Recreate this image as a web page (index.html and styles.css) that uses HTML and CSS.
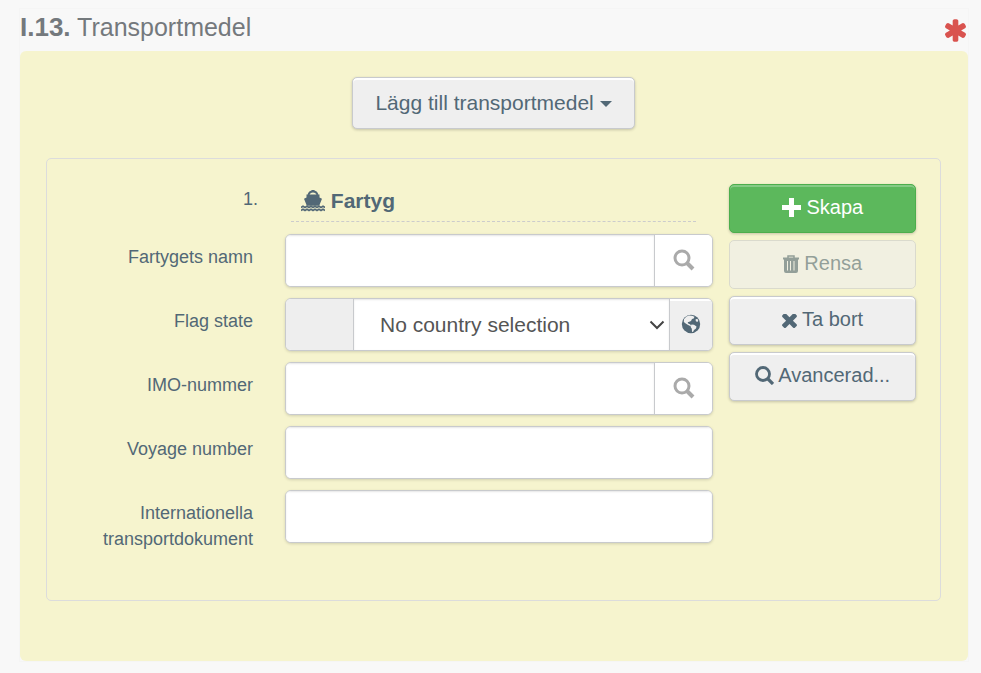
FILE: index.html
```
<!DOCTYPE html>
<html lang="sv">
<head>
    <meta charset="UTF-8">
    <meta name="viewport" content="width=device-width, initial-scale=1.0">
    <title>I.13. Transportmedel</title>
    <link rel="stylesheet" href="styles.css">
</head>
<body>
    <svg class="sprite" aria-hidden="true">
        <symbol id="search" viewBox="0 0 22 22">
            <circle cx="9" cy="9" r="7" fill="none" stroke="currentColor" stroke-width="3"/>
            <path d="M14 14l6 6" fill="none" stroke="currentColor" stroke-width="4"/>
        </symbol>
    </svg>

    <section class="section">
        <header class="section-header">
            <h1><strong>I.13.</strong> Transportmedel</h1>
            <svg class="required" viewBox="180 120 1432 1552" role="img" aria-label="Obligatorisk">
                <path d="M1546 1050q46 26 59.5 77.5t-12.5 97.5l-64 110q-26 46-77.5 59.5t-97.5-12.5l-266-153v307q0 52-38 90t-90 38h-128q-52 0-90-38t-38-90v-307l-266 153q-46 26-97.5 12.5t-77.5-59.5l-64-110q-26-46-12.5-97.5t59.5-77.5l266-154-266-154q-46-26-59.5-77.5t12.5-97.5l64-110q26-46 77.5-59.5t97.5 12.5l266 153v-307q0-52 38-90t90-38h128q52 0 90 38t38 90v307l266-153q46-26 97.5-12.5t77.5 59.5l64 110q26 46 12.5 97.5t-59.5 77.5l-266 154z"/>
            </svg>
        </header>

        <form class="panel">
            <button type="button" class="btn btn-add">Lägg till transportmedel <span class="caret"></span></button>

            <div class="transport">
                <div class="fields">
                    <div class="row">
                        <span class="number">1.</span>
                        <h2 class="title">
                            <svg class="icon-ship" viewBox="0 0 24 22" aria-hidden="true">
                                <path d="M7.500 5C8 2.600 9.500 1.500 12 1.500S16 2.600 16.500 5" fill="none" stroke="currentColor" stroke-width="2"/>
                                <path d="M10.500 0h3v1.500h-3zM5.500 4.500h13v3l2.500 1.200-2.800 7H5.800L3 8.700l2.500-1.200z" fill="currentColor"/>
                                <path d="M0 17.500l2-1.300 2 1.300 2-1.300 2 1.300 2-1.300 2 1.300 2-1.300 2 1.300 2-1.300 2 1.300 2-1.300 2 1.300M0 20.500l2-1.300 2 1.300 2-1.300 2 1.300 2-1.300 2 1.300 2-1.300 2 1.300 2-1.300 2 1.300 2-1.300 2 1.300" fill="none" stroke="currentColor" stroke-width="1.600"/>
                            </svg>
                            Fartyg
                        </h2>
                    </div>
                    <div class="row">
                        <label for="shipName">Fartygets namn</label>
                        <div class="group">
                            <input type="text" id="shipName">
                            <button type="button" class="addon addon-search" aria-label="Sök fartyg"><svg><use href="#search"/></svg></button>
                        </div>
                    </div>
                    <div class="row">
                        <label for="flagState">Flag state</label>
                        <div class="group">
                            <span class="flag"></span>
                            <div class="select">
                                <select id="flagState">
                                    <option>No country selection</option>
                                </select>
                                <svg class="chevron" viewBox="0 0 16 10" aria-hidden="true"><path d="M1.500 1.500L8 8l6.500-6.500" fill="none" stroke="currentColor" stroke-width="2"/></svg>
                            </div>
                            <button type="button" class="addon addon-globe" aria-label="Land">
                                <svg viewBox="0 0 20 20">
                                    <circle cx="10" cy="10" r="9.200" fill="currentColor"/>
                                    <path d="M3 5l2.500-2.600 2.500-.9 3 .3 2.500 1-.8 1.700-1.700.6-1 1.900-1.700.8-1.600.5.500 1.300 1.800.6 1.200 1.300-1.100.5-2.400-1.200-2-1.300-1.900-1.500zM14.500 5.500l1.800-.7 1 1.700-.9 1.600-1.500-.8zM10.500 10.500l2.500.3 2.500 1.700-.5 2-2 1.600-1 1.900-1-.3-.2-3-1.300-2z" class="land"/>
                                </svg>
                            </button>
                        </div>
                    </div>
                    <div class="row">
                        <label for="imo">IMO-nummer</label>
                        <div class="group">
                            <input type="text" id="imo">
                            <button type="button" class="addon addon-search" aria-label="Sök IMO-nummer"><svg><use href="#search"/></svg></button>
                        </div>
                    </div>
                    <div class="row">
                        <label for="voyage">Voyage number</label>
                        <div class="group">
                            <input type="text" id="voyage">
                        </div>
                    </div>
                    <div class="row">
                        <label for="documents">Internationella transportdokument</label>
                        <div class="group">
                            <input type="text" id="documents">
                        </div>
                    </div>
                </div>

                <div class="actions">
                    <button type="button" class="btn btn-success">
                        <svg class="icon-plus" viewBox="0 0 19 19" aria-hidden="true"><path d="M7 0h5v7h7v5h-7v7H7v-7H0V7h7z" fill="currentColor"/></svg>
                        Skapa
                    </button>
                    <button type="button" class="btn" disabled>
                        <svg class="icon-trash" viewBox="0 0 16 18" aria-hidden="true">
                            <path d="M5 3V1h6v2" fill="none" stroke="currentColor" stroke-width="1.500"/>
                            <path fill-rule="evenodd" d="M0 2.500h16v2h-1V16q0 2-2 2H3q-2 0-2-2V4.500H0zM4 6v9.500h1V6zM7 6v9.500h1V6zM10.500 6v9.500h1V6z" fill="currentColor"/>
                        </svg>
                        Rensa
                    </button>
                    <button type="button" class="btn">
                        <svg class="icon-times" viewBox="300 430 1192 1196" aria-hidden="true"><path fill="currentColor" d="M1490 1322q0 40-28 68l-136 136q-28 28-68 28t-68-28l-294-294-294 294q-28 28-68 28t-68-28l-136-136q-28-28-28-68t28-68l294-294-294-294q-28-28-28-68t28-68l136-136q28-28 68-28t68 28l294 294 294-294q28-28 68-28t68 28l136 136q28 28 28 68t-28 68l-294 294 294 294q28 28 28 68z"/></svg>
                        Ta bort
                    </button>
                    <button type="button" class="btn">
                        <svg class="icon-search" viewBox="0 0 19 19" aria-hidden="true">
                            <circle cx="8" cy="8" r="6.500" fill="none" stroke="currentColor" stroke-width="2.800"/>
                            <path d="M12.500 12.500l5.500 5.500" fill="none" stroke="currentColor" stroke-width="3.200"/>
                        </svg>
                        Avancerad...
                    </button>
                </div>
            </div>
        </form>
    </section>
</body>
</html>
```

FILE: styles.css
```
* {
    box-sizing: border-box;
}
body {
    margin: 0;
    padding: 8px 12px 12px 19px;
    background: #f8f8f8;
    color: #526876;
    font-family: Arial, "Liberation Sans", sans-serif;
    font-size: 18px;
    line-height: 26px;
}
.sprite {
    display: none;
}
.section {
    border: 1px solid #f5f5f5;
}
.section-header {
    display: flex;
    justify-content: space-between;
    height: 42px;
    padding-right: 2px;
}
h1 {
    margin: 0;
    padding-top: 4px;
    color: #74797d;
    font-size: 25px;
    font-weight: normal;
    line-height: 28px;
}
h1 strong {
    font-size: 26px;
}
.required {
    width: 21px;
    height: 23px;
    margin-top: 10px;
    fill: #d9534f;
}
.panel {
    padding: 26px 27px 60px 26px;
    border-radius: 6px;
    background: #f6f4ce;
    text-align: center;
}
.btn {
    height: 49px;
    padding: 0 20px 2px;
    border: 1px solid #c8cacd;
    border-radius: 5px;
    background: #efefef;
    box-shadow: inset 0 2px 0 #fff, 0 1px 3px rgba(0, 0, 0, 0.2);
    color: #526876;
    font-family: inherit;
    font-size: 20px;
    cursor: pointer;
}
.btn svg {
    vertical-align: -3px;
}
.btn-add {
    height: 52px;
    padding: 0 22px;
    font-size: 21px;
}
.caret {
    display: inline-block;
    border-top: 6px solid;
    border-right: 6px solid transparent;
    border-left: 6px solid transparent;
    vertical-align: 3px;
}
.btn-success {
    border-color: #4cae4c;
    background: #5cb85c;
    box-shadow: inset 0 2px 0 #85ca85, 0 1px 3px rgba(0, 0, 0, 0.2);
    color: #fff;
}
.btn:disabled {
    opacity: 0.6;
    box-shadow: none;
    cursor: default;
}
.transport {
    display: grid;
    grid-template-columns: 666fr 187fr;
    gap: 16px;
    margin-top: 29px;
    padding: 25px 24px 48px 0;
    border: 1px solid #dcdcdc;
    border-radius: 5px;
}
.fields {
    display: flex;
    flex-direction: column;
    gap: 11px;
}
.row {
    display: grid;
    grid-template-columns: 206fr 428fr;
    gap: 32px;
}
.row label {
    padding: 10px 0 0 40px;
    text-align: right;
}
.number {
    padding: 2px 0 0;
    margin-right: -5px;
    text-align: right;
}
.title {
    height: 38px;
    margin: 0 17px 1px 6px;
    padding: 4px 0 0 10px;
    border-bottom: 1px dashed #ccc;
    font-size: 21px;
    text-align: left;
}
.icon-ship {
    width: 24px;
    height: 22px;
    vertical-align: -4px;
}
.group {
    display: flex;
    height: 53px;
    border: 1px solid #c8cacd;
    border-radius: 6px;
    background: #fff;
    box-shadow: 0 1px 3px rgba(0, 0, 0, 0.15);
    overflow: hidden;
}
.group input,
.group select {
    flex: 1;
    width: 100%;
    min-width: 0;
    height: 100%;
    padding: 0 26px;
    border: 0;
    background: #fff;
    box-shadow: inset 0 1px 2px rgba(0, 0, 0, 0.1);
    color: #555;
    font-family: inherit;
    font-size: 21px;
    appearance: none;
}
.flag {
    width: 68px;
    border-right: 1px solid #c8cacd;
    background: #eee;
}
.select {
    position: relative;
    flex: 1;
}
.chevron {
    position: absolute;
    top: 21px;
    right: 4px;
    width: 16px;
    height: 10px;
    color: #444;
    pointer-events: none;
}
.addon {
    padding: 0 0 2px;
    border: 0;
    border-left: 1px solid #c8cacd;
    cursor: pointer;
}
.addon svg {
    display: block;
    margin: 0 auto;
}
.addon-search {
    width: 58px;
    background: #fff;
    color: #aaa;
}
.addon-search svg {
    width: 22px;
    height: 22px;
}
.addon-globe {
    width: 43px;
    background: #efefef;
    box-shadow: inset 0 2px 0 #fff;
    color: #526876;
}
.addon-globe svg {
    width: 20px;
    height: 20px;
}
.land {
    fill: #efefef;
}
.actions {
    display: flex;
    flex-direction: column;
    gap: 7px;
}
.icon-plus {
    width: 19px;
    height: 19px;
}
.icon-trash {
    width: 16px;
    height: 18px;
}
.icon-times {
    width: 15px;
    height: 15px;
}
.icon-search {
    width: 19px;
    height: 19px;
}
```
